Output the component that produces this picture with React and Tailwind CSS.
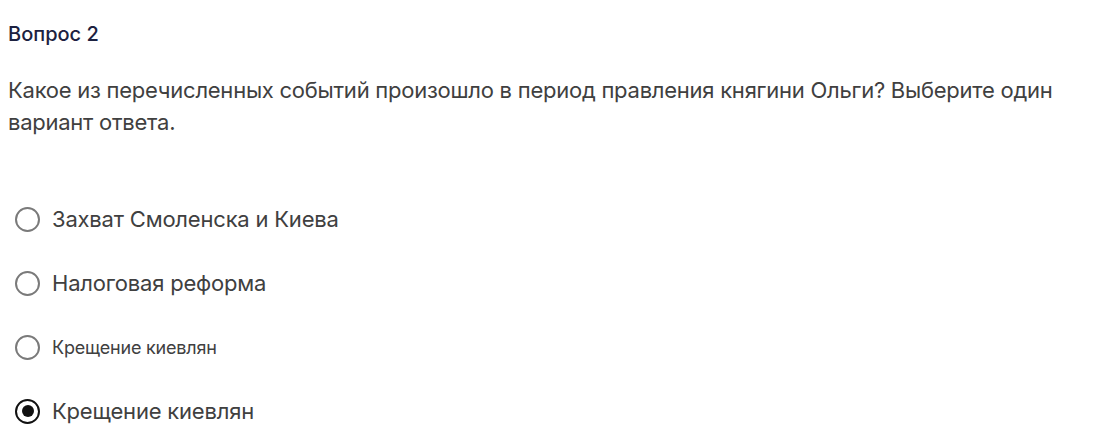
import { useState } from 'react';

// One quiz question with a single-choice answer list.
const options = [
  { id: 1, label: 'Захват Смоленска и Киева', size: 'text-[22px]' },
  { id: 2, label: 'Налоговая реформа', size: 'text-[22px]' },
  { id: 3, label: 'Крещение киевлян', size: 'text-[18px]' },
  { id: 4, label: 'Крещение киевлян', size: 'text-[22px]' },
];

function Radio({ checked }) {
  return (
    <span
      className={`flex h-[25px] w-[25px] shrink-0 items-center justify-center rounded-full border-[2.5px] ${
        checked ? 'border-[#111]' : 'border-[#7a7a7a]'
      }`}
    >
      {checked && <span className="h-[12px] w-[12px] rounded-full bg-[#111]" />}
    </span>
  );
}

export default function App() {
  const [selected, setSelected] = useState(4);

  return (
    <div className="h-[445px] w-[1107px] overflow-hidden bg-white font-['Inter',sans-serif]">
      <div className="px-[8px] pt-[20px]">
        <h2 className="text-[20px] font-medium leading-[28px] text-[#1c2140]">Вопрос 2</h2>
        <p className="mt-[26px] text-[22px] leading-[32px] text-[#404040] tracking-[-0.25px]">
          Какое из перечисленных событий произошло в период правления княгини Ольги? Выберите один
          вариант ответа.
        </p>
      </div>

      <div className="mt-[49px] flex flex-col">
        {options.map((o) => (
          <button
            key={o.id}
            onClick={() => setSelected(o.id)}
            className="flex h-[64px] items-center gap-[12px] pl-[15px] text-left"
          >
            <Radio checked={selected === o.id} />
            <span className={`${o.size} text-[#404040] tracking-[-0.2px]`}>{o.label}</span>
          </button>
        ))}
      </div>
    </div>
  );
}
